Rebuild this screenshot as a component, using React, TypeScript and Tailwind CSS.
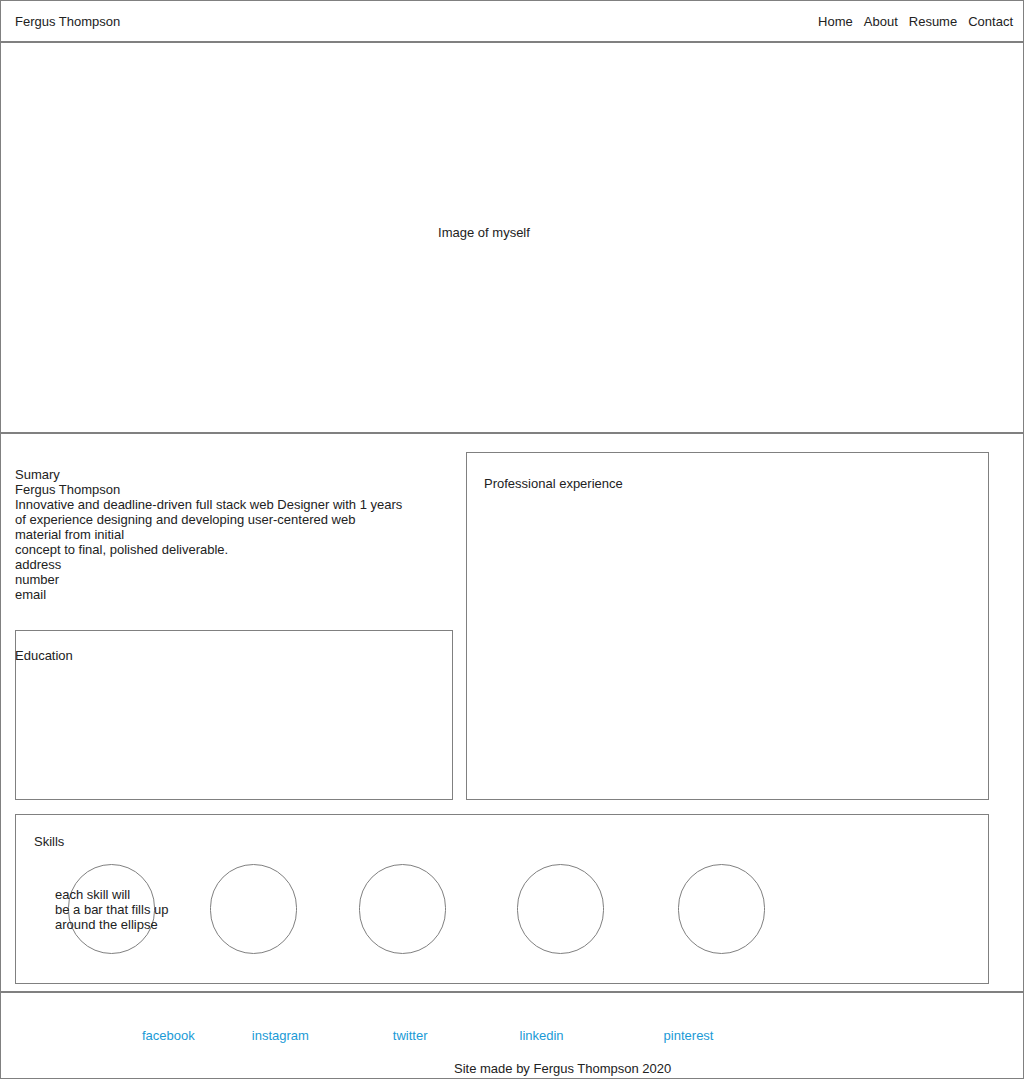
const navLinks = ["Home", "About", "Resume", "Contact"];

const socials = [
  { name: "facebook", ml: "ml-[141px]" },
  { name: "instagram", ml: "ml-[57px]" },
  { name: "twitter", ml: "ml-[84px]" },
  { name: "linkedin", ml: "ml-[92px]" },
  { name: "pinterest", ml: "ml-[100px]" },
];

// gaps between skill ellipses are uneven in the mockup
const skillGaps = ["ml-[52px]", "ml-[55px]", "ml-[62px]", "ml-[71px]", "ml-[74px]"];

const summary = [
  "Sumary",
  "Fergus Thompson",
  "Innovative and deadline-driven full stack web Designer with 1 years",
  "of experience designing and developing user-centered web",
  "material from initial",
  "concept to final, polished deliverable.",
  "address",
  "number",
  "email",
];

const App = () => {
  return (
    <div
      className="w-[1024px] bg-white text-[13px] leading-[15px] text-[#222]"
      style={{ fontFamily: '"Liberation Sans", Arial, sans-serif' }}
    >
      {/* Header */}
      <header className="h-[42px] border border-[#808080] flex items-center justify-between pl-[14px] pr-[10px]">
        <span>Fergus Thompson</span>
        <nav className="flex gap-[11px]">
          {navLinks.map((link) => (
            <span key={link}>{link}</span>
          ))}
        </nav>
      </header>

      {/* Hero */}
      <section className="h-[391px] border border-[#808080] flex items-center justify-center pr-[56px] pb-[10px]">
        <span>Image of myself</span>
      </section>

      {/* Main */}
      <main className="h-[559px] border border-[#808080] pl-[14px] pt-[18px]">
        <div className="flex gap-[13px] h-[348px]">
          <div className="w-[438px] flex flex-col justify-between">
            <div className="pt-[15px]">
              {summary.map((line, i) => (
                <div key={i}>{line}</div>
              ))}
            </div>
            <div className="h-[170px] border border-[#808080] pt-[17px]">
              <span className="-ml-px">Education</span>
            </div>
          </div>
          <div className="w-[523px] border border-[#808080] pl-[17px] pt-[23px]">
            Professional experience
          </div>
        </div>

        <div className="mt-[14px] w-[974px] h-[170px] border border-[#808080] pt-[19px] pl-[18px]">
          <div>Skills</div>
          <div className="flex mt-[15px] -ml-[18px]">
            {skillGaps.map((gap, i) => (
              <div
                key={i}
                className={`relative w-[87px] h-[90px] rounded-full border border-[#808080] shrink-0 ${gap}`}
              >
                {i === 0 && (
                  <div className="absolute left-[-14px] top-[22px] whitespace-nowrap">
                    each skill will
                    <br />
                    be a bar that fills up
                    <br />
                    around the ellipse
                  </div>
                )}
              </div>
            ))}
          </div>
        </div>
      </main>

      {/* Footer */}
      <footer className="h-[87px] border border-[#808080] flex flex-col">
        <div className="flex mt-[35px] text-[#1a9ad6]">
          {socials.map((s) => (
            <span key={s.name} className={s.ml}>
              {s.name}
            </span>
          ))}
        </div>
        <div className="mt-auto mb-[2px] pl-[453px]">Site made by Fergus Thompson 2020</div>
      </footer>
    </div>
  );
};

export default App;
